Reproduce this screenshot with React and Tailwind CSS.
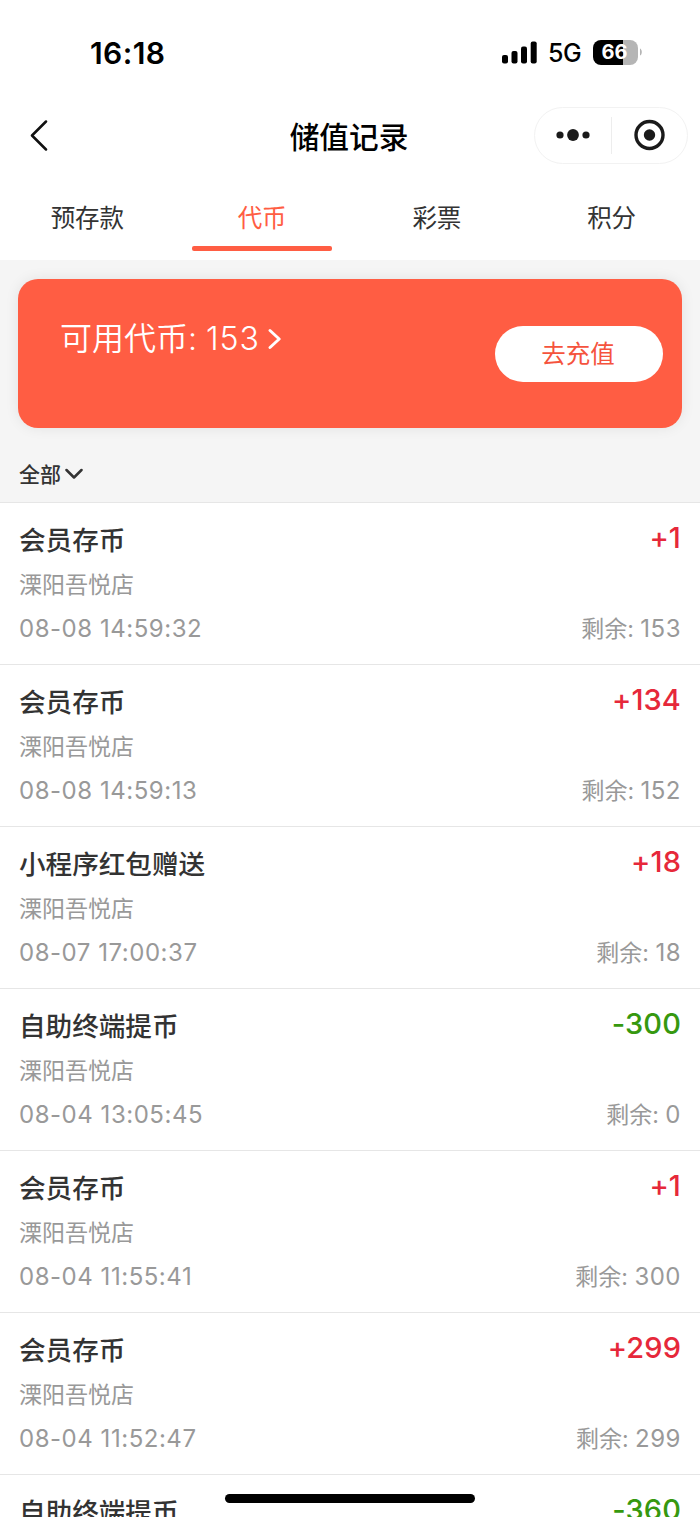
const records = [
  { title: '会员存币', time: '08-08 14:59:32', amount: '+1', left: '153' },
  { title: '会员存币', time: '08-08 14:59:13', amount: '+134', left: '152' },
  { title: '小程序红包赠送', time: '08-07 17:00:37', amount: '+18', left: '18' },
  { title: '自助终端提币', time: '08-04 13:05:45', amount: '-300', left: '0' },
  { title: '会员存币', time: '08-04 11:55:41', amount: '+1', left: '300' },
  { title: '会员存币', time: '08-04 11:52:47', amount: '+299', left: '299' },
  { title: '自助终端提币', amount: '-360' },
];

const tabs = ['预存款', '代币', '彩票', '积分'];

function StatusBar() {
  return (
    <div className="flex h-[104px] shrink-0 items-center justify-between pl-[90px] pr-[58px] text-black">
      <span className="pt-px text-[30px] font-semibold leading-none tracking-[0.4px]">16:18</span>
      <div className="flex items-center">
        <svg width="36" height="23" viewBox="0 0 36 23" fill="currentColor">
          <rect x="1" y="14" width="6" height="8.5" rx="2" />
          <rect x="10.5" y="10" width="6" height="12.5" rx="2" />
          <rect x="20" y="5.5" width="6" height="17" rx="2" />
          <rect x="29.7" y="0.5" width="6" height="22" rx="2" />
        </svg>
        <span className="ml-[11px] w-[34px] pt-[3px] text-[25px] font-medium leading-none tracking-[-0.5px]">5G</span>
        <div className="ml-[11px] flex h-[25px] w-[45px] items-center justify-center rounded-[8px] bg-[linear-gradient(90deg,#000_66%,#b5b5b5_66%)] pr-[2px] text-[20px] font-bold leading-none text-white">
          66
        </div>
        <svg className="ml-[2px]" width="2" height="8" viewBox="0 0 2 8">
          <path d="M0 0.5C2.4 1.5 2.4 6.5 0 7.5Z" fill="#b5b5b5" />
        </svg>
      </div>
    </div>
  );
}

function NavBar() {
  return (
    <div className="flex h-[62px] shrink-0 items-center justify-between pl-[29px] pr-[12px]">
      <div className="w-[136px]">
        <svg width="20" height="32" viewBox="0 0 20 32" fill="none" stroke="#111" strokeWidth="2.5" strokeLinecap="round" strokeLinejoin="round">
          <path d="M17 2.5L3 16.5L17 30.5" />
        </svg>
      </div>
      <h1 className="pr-px pt-[5px] text-[29.7px] font-medium leading-none text-black">储值记录</h1>
      <div className="flex h-[57px] w-[154px] items-center rounded-full border border-[#f2f2f2]">
        <svg className="w-[76px]" height="20" viewBox="0 0 76 20" fill="#1a1a1a">
          <circle cx="25" cy="10" r="3.6" />
          <circle cx="38" cy="10" r="5.9" />
          <circle cx="51" cy="10" r="3.6" />
        </svg>
        <div className="h-[37px] w-px bg-[#ededed]" />
        <svg className="w-[75px]" height="32" viewBox="0 0 75 32">
          <circle cx="37.5" cy="16" r="13.5" fill="none" stroke="#1a1a1a" strokeWidth="3.4" />
          <circle cx="37.5" cy="16" r="5.7" fill="#1a1a1a" />
        </svg>
      </div>
    </div>
  );
}

function Tabs() {
  return (
    <div className="grid h-[94px] w-[699px] shrink-0 grid-cols-4">
      {tabs.map((t, i) => (
        <div
          key={t}
          className={
            'flex flex-col items-center pt-[30px] text-[24.5px] leading-[44px] ' +
            (i === 1 ? 'text-[#ff5d43]' : 'text-[#333]')
          }
        >
          <span>{t}</span>
          {i === 1 && <span className="mt-[6px] h-[5px] w-[140px] rounded-[2px] bg-[#ff5d43]" />}
        </div>
      ))}
    </div>
  );
}

function Balance() {
  return (
    <div className="h-[242px] shrink-0 bg-[#f5f5f5] px-[18px] pt-[19px]">
      <div className="flex h-[149px] justify-between rounded-[20px] bg-[#ff5d43] pl-[42px] pr-[19px] shadow-[0_0_14px_rgba(0,0,0,0.08)]">
        <div className="mt-[38px] flex h-[44px] items-center text-white">
          <span className="whitespace-nowrap text-[32px] font-[350] leading-[44px]">
            可用代币: <span className="tracking-[0.9px]">153</span>
          </span>
          <svg className="ml-[8px]" width="14" height="22" viewBox="0 0 14 22" fill="none" stroke="currentColor" strokeWidth="2.9" strokeLinecap="round" strokeLinejoin="round">
            <path d="M2 2.5L11.2 11L2 19.5" />
          </svg>
        </div>
        <button className="mt-[47px] h-[56px] w-[168px] rounded-full bg-white pr-[2px] text-[24.5px] leading-none text-[#f5533d]">
          去充值
        </button>
      </div>
      <div className="mt-[26px] flex h-[40px] items-center pl-px text-[#333]">
        <span className="text-[21px] font-medium leading-none">全部</span>
        <svg className="ml-[4px]" width="18" height="12" viewBox="0 0 18 12" fill="none" stroke="currentColor" strokeWidth="2.5" strokeLinecap="round" strokeLinejoin="round">
          <path d="M1.5 2L9 9.5L16.5 2" />
        </svg>
      </div>
    </div>
  );
}

function Record({ title, time, amount, left }) {
  return (
    <li className="flex h-[162px] shrink-0 justify-between border-t border-[#e6e6e6] px-[19px] pt-[15px] leading-[44px] text-[#999]">
      <div className="flex flex-col">
        <span className="text-[26.6px] font-medium text-[#333]">{title}</span>
        {time && <span className="pt-px text-[23px]">溧阳吾悦店</span>}
        {time && <span className="text-[24px] tracking-[0.53px]">{time}</span>}
      </div>
      <div className="flex flex-col items-end justify-between pb-[13px]">
        <span className={'text-[29px] font-medium leading-[40px] tracking-[0.1px] ' + (amount[0] === '+' ? 'text-[#e6283a]' : 'text-[#36980f]')}>
          {amount}
        </span>
        {left && (
          <span className="whitespace-nowrap text-[23px]">
            剩余: <span className="text-[24px] tracking-[0.5px]">{left}</span>
          </span>
        )}
      </div>
    </li>
  );
}

export default function App() {
  return (
    <div className="relative flex h-[1517px] w-[700px] flex-col overflow-hidden bg-white font-['Inter','Noto_Sans_CJK_SC',sans-serif]">
      <StatusBar />
      <NavBar />
      <Tabs />
      <Balance />
      <ul className="flex flex-col">
        {records.map((r, i) => (
          <Record key={i} {...r} />
        ))}
      </ul>
      <div className="absolute bottom-[14px] left-[225px] h-[9px] w-[250px] rounded-full bg-black" />
    </div>
  );
}
